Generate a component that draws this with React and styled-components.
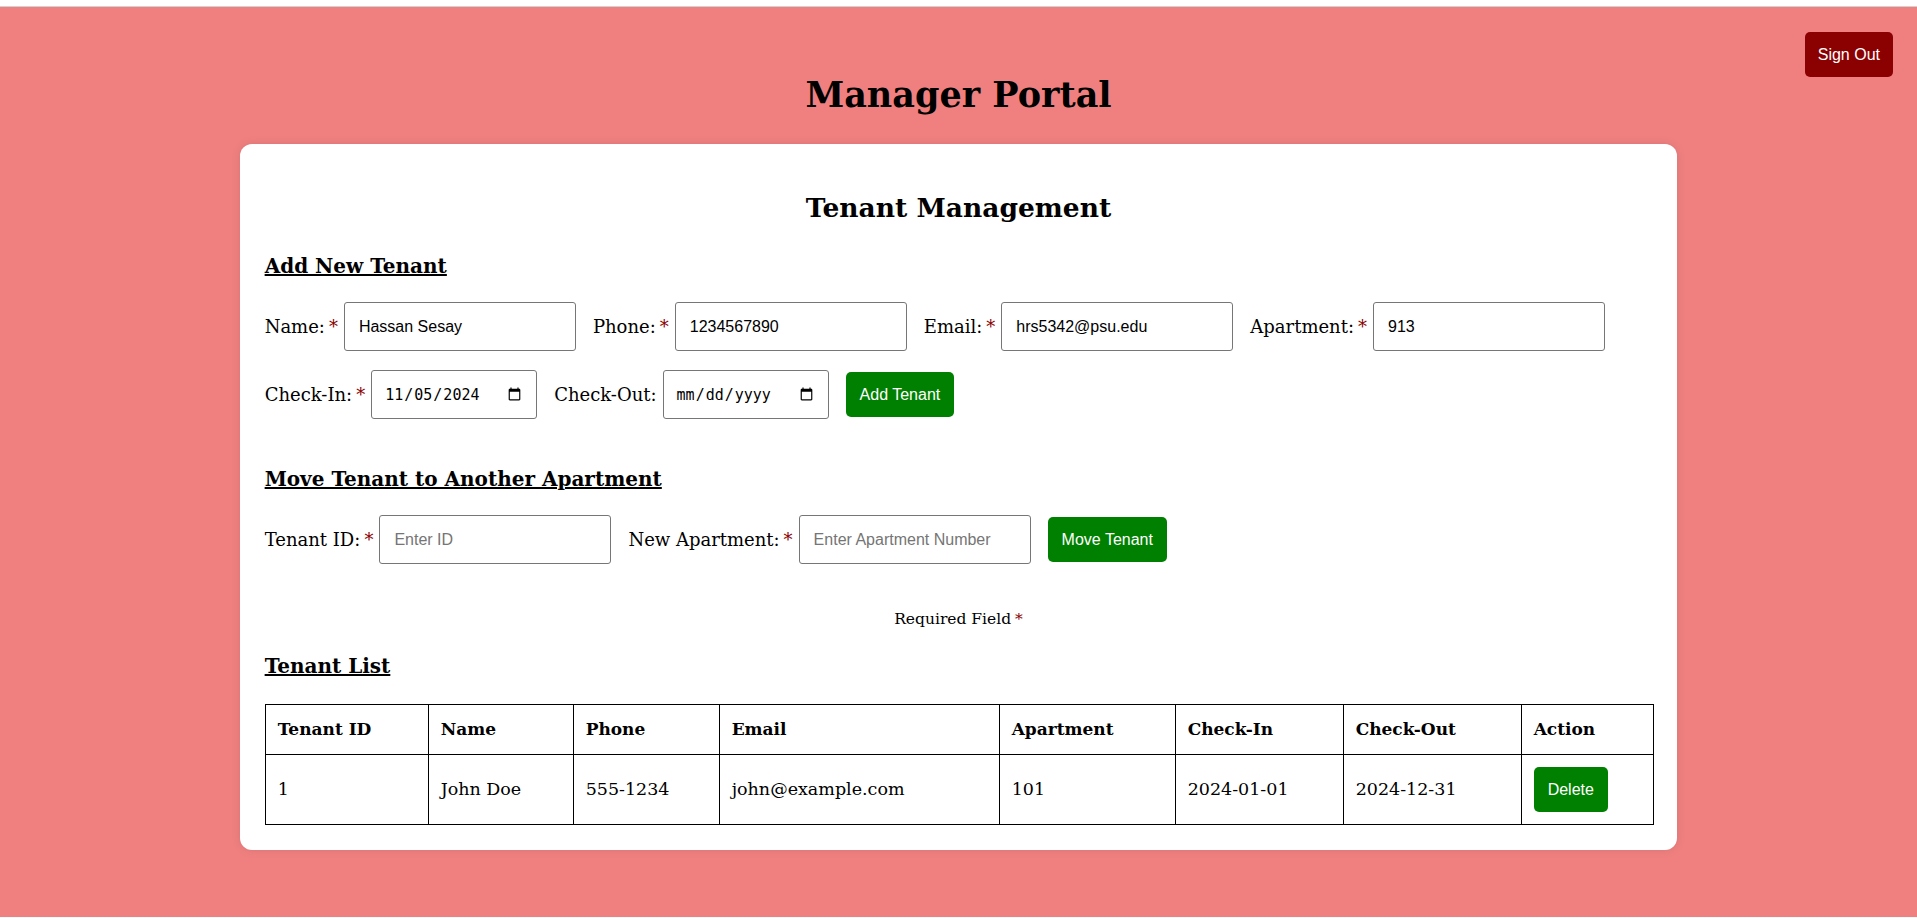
import React from "react";
import styled, { createGlobalStyle } from "styled-components";

const Global = createGlobalStyle`
  body {
    margin: 0;
    padding-top: 6px;
    background: #ffffff;
    font-family: "DejaVu Serif", serif;
    color: #000;
  }
`;

const tenants = [
  {
    id: 1,
    name: "John Doe",
    phone: "555-1234",
    email: "john@example.com",
    apartment: "101",
    checkIn: "2024-01-01",
    checkOut: "2024-12-31",
  },
];

const columns = [
  { label: "Tenant ID", w: 163 },
  { label: "Name", w: 145 },
  { label: "Phone", w: 146 },
  { label: "Email", w: 280 },
  { label: "Apartment", w: 176 },
  { label: "Check-In", w: 168 },
  { label: "Check-Out", w: 178 },
  { label: "Action", w: 132 },
];

function App() {
  return (
    <Page>
      <Global />
      <SignOut>Sign Out</SignOut>
      <Title>Manager Portal</Title>
      <Card>
        <CardTitle>Tenant Management</CardTitle>

        <SectionTitle $top={31}>Add New Tenant</SectionTitle>
        <FormRow $top={24}>
          <Field>
            <span>
              Name:<Req>*</Req>
            </span>
            <TextInput defaultValue="Hassan Sesay" />
          </Field>
          <Field>
            <span>
              Phone:<Req>*</Req>
            </span>
            <TextInput defaultValue="1234567890" />
          </Field>
          <Field>
            <span>
              Email:<Req>*</Req>
            </span>
            <TextInput defaultValue="hrs5342@psu.edu" />
          </Field>
          <Field>
            <span>
              Apartment:<Req>*</Req>
            </span>
            <TextInput defaultValue="913" />
          </Field>
        </FormRow>
        <FormRow $top={19}>
          <Field>
            <span>
              Check-In:<Req>*</Req>
            </span>
            <DateInput type="date" defaultValue="2024-11-05" />
          </Field>
          <Field>
            <span>Check-Out:</span>
            <DateInput type="date" />
          </Field>
          <Button>Add Tenant</Button>
        </FormRow>

        <SectionTitle $top={48}>Move Tenant to Another Apartment</SectionTitle>
        <FormRow $top={24}>
          <Field>
            <span>
              Tenant ID:<Req>*</Req>
            </span>
            <TextInput placeholder="Enter ID" />
          </Field>
          <Field>
            <span>
              New Apartment:<Req>*</Req>
            </span>
            <TextInput placeholder="Enter Apartment Number" />
          </Field>
          <Button>Move Tenant</Button>
        </FormRow>

        <Note>
          Required Field<Req>*</Req>
        </Note>

        <SectionTitle $top={26}>Tenant List</SectionTitle>
        <Table>
          <colgroup>
            {columns.map((c) => (
              <Col key={c.label} $w={c.w} />
            ))}
          </colgroup>
          <thead>
            <tr>
              {columns.map((c) => (
                <Th key={c.label}>{c.label}</Th>
              ))}
            </tr>
          </thead>
          <tbody>
            {tenants.map((t) => (
              <tr key={t.id}>
                <Td>{t.id}</Td>
                <Td>{t.name}</Td>
                <Td>{t.phone}</Td>
                <Td>{t.email}</Td>
                <Td>{t.apartment}</Td>
                <Td>{t.checkIn}</Td>
                <Td>{t.checkOut}</Td>
                <Td>
                  <Button>Delete</Button>
                </Td>
              </tr>
            ))}
          </tbody>
        </Table>
      </Card>
    </Page>
  );
}

export default App;

const Page = styled.div`
  position: relative;
  min-height: calc(100vh - 7px);
  background-color: #f08080;
  border-top: 1px solid #d2d2d2;
  display: flex;
  flex-direction: column;
  align-items: center;
  padding-top: 68px;
  box-sizing: border-box;
`;

const Button = styled.button`
  background-color: #008000;
  color: white;
  border: none;
  border-radius: 5px;
  padding: 13px 14px;
  font-family: "Liberation Sans", Arial, sans-serif;
  font-size: 16px;
  line-height: 19px;
  cursor: pointer;
`;

const SignOut = styled(Button)`
  position: absolute;
  top: 25px;
  right: 24px;
  padding: 13px 13px;
  background-color: #8b0000;
`;

const Title = styled.h1`
  margin: 0;
  font-size: 35px;
  line-height: 40px;
  font-weight: bold;
`;

const Card = styled.div`
  width: 75%;
  box-sizing: border-box;
  margin-top: 29px;
  padding: 25px;
  background-color: white;
  border-radius: 12px;
  box-shadow: 0 0 10px rgba(0, 0, 0, 0.1);
`;

const CardTitle = styled.h2`
  margin: 23px 0 0;
  text-align: center;
  font-size: 26.5px;
  line-height: 31px;
`;

const SectionTitle = styled.h3`
  margin: ${(p) => p.$top}px 0 0;
  font-size: 20px;
  line-height: 24px;
  text-decoration: underline;
`;

const FormRow = styled.div`
  display: flex;
  align-items: center;
  gap: 17px;
  margin-top: ${(p) => p.$top}px;
`;

const Field = styled.label`
  display: flex;
  align-items: center;
  gap: 6px;
  font-size: 18px;
`;

const Req = styled.span`
  margin-left: 4px;
  color: #8b0000;
`;

const TextInput = styled.input`
  width: 232px;
  height: 49px;
  box-sizing: border-box;
  padding: 0 14px;
  border: 1px solid #767676;
  border-radius: 3px;
  font-family: "Liberation Sans", Arial, sans-serif;
  font-size: 16px;
  color: #000;
  &::placeholder {
    color: #757575;
  }
`;

const DateInput = styled(TextInput)`
  width: 166px;
  padding: 0 12px;
  font-family: "DejaVu Sans Mono", monospace;
  font-size: 15px;
`;

const Note = styled.p`
  margin: 46px 0 0;
  text-align: center;
  font-size: 15.5px;
  line-height: 18px;
`;

const Table = styled.table`
  width: 100%;
  margin-top: 26px;
  border-collapse: collapse;
  table-layout: fixed;
`;

const Col = styled.col`
  width: ${(p) => p.$w}px;
`;

const Th = styled.th`
  border: 1px solid black;
  padding: 12px;
  text-align: left;
  font-size: 17px;
  line-height: 25px;
`;

const Td = styled.td`
  border: 1px solid black;
  padding: 12px;
  font-size: 17.5px;
  line-height: 25px;
`;
